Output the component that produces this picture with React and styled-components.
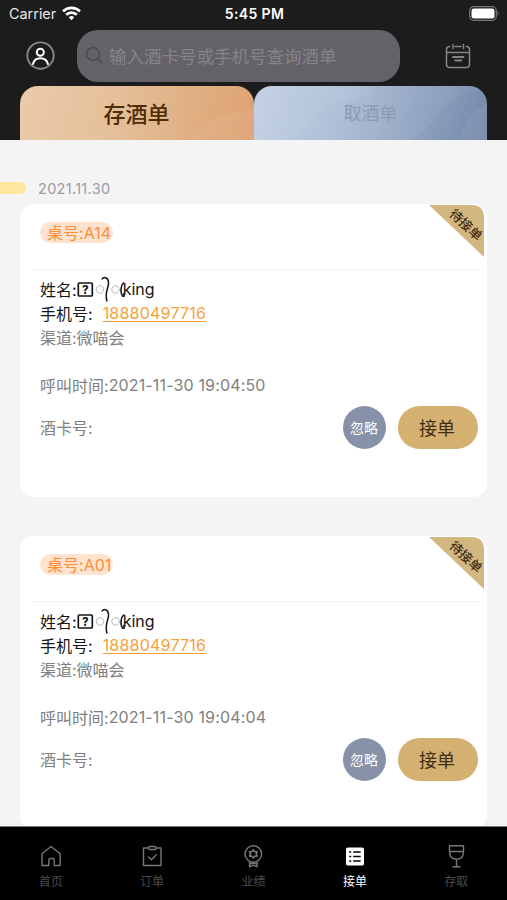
import React from 'react';
import styled, { createGlobalStyle } from 'styled-components';

const Global = createGlobalStyle`
  * { box-sizing: border-box; }
  body { margin: 0; overflow: hidden; }
  button { border: 0; padding: 0; background: none; font: inherit; }
`;

const Screen = styled.div`
  width: 507px;
  height: 900px;
  display: flex;
  flex-direction: column;
  overflow: hidden;
  background: #f4f4f4;
  font-family: Inter, 'Noto Sans CJK SC', sans-serif;
`;
const Header = styled.header`
  flex: none;
  height: 140px;
  background: #1c1c1c;
  display: flex;
  flex-direction: column;
`;
const StatusBar = styled.div`
  height: 30px;
  padding: 0 7px 3px 9px;
  display: grid;
  grid-template-columns: 1fr auto 1fr;
  align-items: center;
  color: #fff;
  font-size: 14px;
`;
const Carrier = styled.div`
  display: flex;
  align-items: center;
  gap: 6px;
  color: #e6e6e6;
  font-size: 14.4px;
`;
const Clock = styled.div`
  font-weight: 600;
  font-size: 14px;
  letter-spacing: 0.35px;
`;
const BatterySlot = styled.div`
  display: flex;
  justify-content: flex-end;
`;
const SearchRow = styled.div`
  height: 56px;
  display: flex;
  align-items: flex-start;
  padding-left: 25px;
`;
const Avatar = styled.div`
  width: 31px;
  height: 52px;
  display: flex;
  align-items: center;
`;
const SearchBox = styled.div`
  margin-left: 21px;
  width: 323px;
  height: 52px;
  border-radius: 21px;
  background: #646268;
  display: flex;
  align-items: center;
  padding: 0 0 1px 8px;
  gap: 5px;
  color: #858489;
  font-size: 17.5px;
  white-space: nowrap;
`;
const CalendarSlot = styled.div`
  margin-left: 45px;
  height: 52px;
  display: flex;
  align-items: center;
`;
const Tabs = styled.div`
  height: 54px;
  margin: 0 20px;
  display: flex;
`;
const Tab = styled.button`
  width: ${p => (p.$active ? 234 : 233)}px;
  height: 54px;
  border-radius: 18px 18px 0 0;
  overflow: hidden;
  display: grid;
  > * { grid-area: 1 / 1; }
  place-items: center;
  color: ${p => (p.$active ? '#4f2c08' : '#8b9bb2')};
  font-size: ${p => (p.$active ? 22 : 18)}px;
  font-weight: ${p => (p.$active ? 500 : 400)};
  background: ${p => (p.$active
    ? 'linear-gradient(105deg, #ebcbab 0%, #e5c09a 38%, #dfac7e 78%, #dfa273 100%)'
    : 'linear-gradient(105deg, #bfcee4 0%, #abbcd4 38%, #8da1be 72%, #7388aa 100%)')};
`;
const TabLabel = styled.span`
  padding: 0 1px 2px 0;
`;
const Body = styled.main`
  flex: none;
  height: 686px;
  overflow: hidden;
  display: flex;
  flex-direction: column;
`;
const DateRow = styled.div`
  flex: none;
  height: 64px;
  padding-top: 32px;
  display: flex;
  align-items: center;
  gap: 12px;
  color: #9a9ca5;
  font-size: 14.5px;
  letter-spacing: 0.3px;
`;
const DateMark = styled.span`
  width: 26px;
  height: 12px;
  border-radius: 0 6px 6px 0;
  background: #ffe6a0;
`;
const Card = styled.section`
  position: relative;
  flex: none;
  height: 292.5px;
  width: 467px;
  margin: 0 20px 39.5px;
  border-radius: 14px;
  background: #fff;
  padding: 18px 9px 0 20px;
  font-size: 16px;
  color: #7f7f7f;
`;
const Ribbon = styled.div`
  position: absolute;
  right: 2px;
  top: 1px;
`;
const TableTag = styled.div`
  display: inline-flex;
  align-items: center;
  height: 21px;
  padding: 0 2px 1px 7px;
  border-radius: 11px;
  background: #ffe3cf;
  color: #f98e38;
  font-size: 16px;
  white-space: nowrap;
`;
const Divider = styled.div`
  height: 1px;
  margin: 26px -3px 7px -8px;
  background: #f4f4f4;
`;
const Line = styled.div`
  height: 24px;
  display: flex;
  align-items: center;
  white-space: nowrap;
  color: ${p => (p.$strong ? '#151515' : '#808080')};
  margin-top: ${p => p.$gap || 0}px;
`;
const Phone = styled.span`
  margin-left: 10px;
  color: #f9a03c;
  font-size: 16px;
  letter-spacing: 0.22px;
  text-decoration: underline;
  text-underline-offset: 2px;
  text-decoration-thickness: 1px;
`;
const Time = styled.span`
  letter-spacing: 0.15px;
`;
const Actions = styled.div`
  height: 43px;
  margin-top: 8.5px;
  display: flex;
  align-items: center;
`;
const CardNo = styled.span`
  flex: 1;
`;
const IgnoreButton = styled.button`
  width: 43px;
  height: 43px;
  padding-right: 1px;
  border-radius: 50%;
  background: #8791a7;
  color: #fff;
  font-size: 14px;
`;
const AcceptButton = styled.button`
  width: 80px;
  height: 43px;
  margin-left: 12px;
  padding-right: 2px;
  border-radius: 22px;
  background: #d4b071;
  color: #432d12;
  font-size: 18px;
`;
const TabBar = styled.nav`
  flex: none;
  height: 74px;
  background: #000;
  border-top: 1px solid #777;
  display: grid;
  grid-template-columns: repeat(5, 1fr);
`;
const NavItem = styled.div`
  display: flex;
  flex-direction: column;
  align-items: center;
  padding-top: 17px;
  color: ${p => (p.$active ? '#fff' : '#777')};
`;
const NavLabel = styled.span`
  margin-top: 5px;
  height: 18px;
  line-height: 18px;
  font-size: 12px;
  color: ${p => (p.$active ? '#fff' : '#4c4c4c')};
`;

const stroke = { fill: 'none', stroke: 'currentColor', strokeWidth: 1.4, strokeLinecap: 'round', strokeLinejoin: 'round' };

const WifiIcon = () => (
  <svg width="19" height="15" viewBox="0 0 19 15" fill="none" stroke="#fff" strokeWidth="2.7">
    <path d="M1 5.4a12.2 12.2 0 0 1 17 0" />
    <path d="M4.2 8.7a7.6 7.6 0 0 1 10.6 0" />
    <path d="M9.5 14.2 6.8 11.3a4 4 0 0 1 5.4 0z" fill="#fff" stroke="none" />
  </svg>
);
const BatteryIcon = () => (
  <svg width="31" height="15" viewBox="0 0 31 15">
    <rect x=".7" y=".7" width="26.6" height="13.6" rx="4" fill="none" stroke="#777" strokeWidth="1.2" />
    <rect x="2.5" y="2.5" width="23" height="10" rx="2.3" fill="#fff" />
    <path d="M28.5 5q2.2 2.5 0 5z" fill="#777" />
  </svg>
);
const UserIcon = () => (
  <svg width="30" height="30" viewBox="0 0 30 30" fill="none">
    <circle cx="15.5" cy="14.6" r="13.2" stroke="#858585" strokeWidth="1.9" />
    <circle cx="15.3" cy="11.3" r="3.5" stroke="#fff" strokeWidth="2" />
    <path d="M8 23c1-4.1 3.700-5.700 7.400-5.700s6.500 1.600 7.500 5.700" stroke="#fff" strokeWidth="2" strokeLinecap="round" />
  </svg>
);
const SearchIcon = () => (
  <svg width="19" height="19" viewBox="0 0 19 19" fill="none" stroke="#48474c" strokeWidth="1.4" strokeLinecap="round">
    <circle cx="8" cy="8" r="6.400" /><path d="m12.800 12.800 4.200 4.200" />
  </svg>
);
const CalendarIcon = () => (
  <svg width="26" height="28" viewBox="0 0 26 28" fill="none" stroke="#858585" strokeWidth="1.500" strokeLinecap="round">
    <path d="M4.500 4.500Q1.500 4.500 1.500 7.500v15q0 3 3 3h17q3 0 3-3v-15q0-3-3-3M10 4.500h6M1.500 10.500h23" />
    <path d="M8 2.500v4M18.500 2.500v4" />
    <path d="M8 15h10.500" strokeWidth="1.900" /><path d="M10.300 18.500h6" strokeWidth="1.900" />
  </svg>
);
const RibbonArt = () => (
  <svg width="56" height="53" viewBox="0 0 56 53">
    <path d="M0 0h42q13 0 13 13v39z" fill="#d3b780" />
    <text transform="translate(19.500 10) rotate(43)" fontSize="13" fontWeight="500" fill="#432d12">待接单</text>
  </svg>
);
const GlyphRun = styled.svg`
  overflow: visible;
`;
const OddGlyphs = () => (
  <GlyphRun width="46" height="26" viewBox="0 0 46 26" fill="none" stroke="#151515">
    <rect x="1.300" y="7" width="14" height="13" rx="1" strokeWidth="1.700" />
    <text x="8.300" y="17.700" textAnchor="middle" fontSize="11.500" fontWeight="800" fill="#151515" stroke="none">?</text>
    <circle cx="23" cy="13.500" r="3.700" stroke="#999" strokeWidth="1" strokeDasharray="1.600 .6" />
    <path d="M24.800 3.500c2-4 7.200-1.500 6.700 4.500-.5 5-4 9-1.500 17.500" strokeWidth="1.500" />
    <circle cx="38.500" cy="13.500" r="3.700" stroke="#999" strokeWidth="1" strokeDasharray="1.600 .6" />
    <path d="M47 6.500c-3.500 3-4 10-1.500 13.500 1.500 1 2.500-.5 1-3" strokeWidth="1.600" />
  </GlyphRun>
);

const HomeIcon = () => (
  <svg width="24" height="24" viewBox="0 0 24 24" {...stroke}>
    <path d="M3 9.800 12 2.500l9.200 7.300V21.500h-6v-5.500q0-1.500-1.500-1.500h-2.400q-1.500 0-1.500 1.500v5.500H3z" />
  </svg>
);
const OrderIcon = () => (
  <svg width="24" height="24" viewBox="0 0 24 24" {...stroke}>
    <path d="M8 4H3.500v17.500h17.500V4h-4.500" /><rect x="8.500" y="2.500" width="7.500" height="3" rx="1" /><path d="m8.700 13 2.800 2.700 4.700-5" />
  </svg>
);
const MedalIcon = () => (
  <svg width="24" height="24" viewBox="0 0 24 24" {...stroke}>
    <circle cx="12.300" cy="10" r="8.300" />
    <path d="m12.300 5.700 1.400 2h2.400l-.9 2.200.9 2.200h-2.400l-1.400 2-1.400-2H8.500l.9-2.200-.9-2.200h2.400z" strokeWidth="1.600" />
    <path d="M8.500 18v4.800l3.800-1.600 3.800 1.600V18M8.500 20l3.800-1 3.800 1" />
  </svg>
);
const ListIcon = () => (
  <svg width="24" height="24" viewBox="0 0 24 24">
    <rect x="3" y="3.500" width="18" height="18" rx="1.800" fill="#fff" />
    <path d="M6.200 8h2M10.200 8h7.500M6.200 12.500h2M10.200 12.500h7.500M6.200 17h2M10.200 17h7.500" stroke="#000" strokeWidth="1.400" />
  </svg>
);
const WineIcon = () => (
  <svg width="24" height="24" viewBox="0 0 24 24" {...stroke}>
    <path d="M5.500 1.700h14v6q0 7.200-7 7.500-7-.3-7-7.500zM5.500 7.500h14M12.500 15.200v7.300M9 22.700h7" />
  </svg>
);

const orders = [
  { table: 'A14', time: '2021-11-30 19:04:50' },
  { table: 'A01', time: '2021-11-30 19:04:04' },
];
const navItems = [
  { label: '首页', Icon: HomeIcon },
  { label: '订单', Icon: OrderIcon },
  { label: '业绩', Icon: MedalIcon },
  { label: '接单', Icon: ListIcon, active: true },
  { label: '存取', Icon: WineIcon },
];

const TabWave = ({ warm }) => (
  <svg width="234" height="54" viewBox="0 0 234 54" fill="#fff">
    {warm ? (
      <>
        <path d="M60 54c15-10 30-12 50-14s35-7 55-17v31z" fillOpacity=".03" />
        <path d="M170 54c15-20 35-28 64-31v31z" fillOpacity=".05" />
      </>
    ) : (
      <>
        <path d="M65 28C80 15 100 12 120 10V0H0v54h40z" fillOpacity=".05" />
        <path d="M155 54c30-10 22-40 79-54H0v54z" fillOpacity=".05" />
        <path d="M214 34q8-12 20-17v37h-30z" fillOpacity=".06" />
      </>
    )}
  </svg>
);

const OrderCard = ({ order }) => (
  <Card>
    <Ribbon><RibbonArt /></Ribbon>
    <TableTag>桌号:{order.table}</TableTag>
    <Divider />
    <Line $strong>姓名:<OddGlyphs />king</Line>
    <Line $strong>手机号:<Phone>18880497716</Phone></Line>
    <Line>渠道:微喵会</Line>
    <Line $gap={24}>呼叫时间:<Time>{order.time}</Time></Line>
    <Actions>
      <CardNo>酒卡号:</CardNo>
      <IgnoreButton>忽略</IgnoreButton>
      <AcceptButton>接单</AcceptButton>
    </Actions>
  </Card>
);

export default function App() {
  return (
    <Screen>
      <Global />
      <Header>
        <StatusBar>
          <Carrier>Carrier<WifiIcon /></Carrier>
          <Clock>5:45 PM</Clock>
          <BatterySlot><BatteryIcon /></BatterySlot>
        </StatusBar>
        <SearchRow>
          <Avatar><UserIcon /></Avatar>
          <SearchBox><SearchIcon />输入酒卡号或手机号查询酒单</SearchBox>
          <CalendarSlot><CalendarIcon /></CalendarSlot>
        </SearchRow>
        <Tabs>
          <Tab $active><TabWave warm /><TabLabel>存酒单</TabLabel></Tab>
          <Tab><TabWave /><TabLabel>取酒单</TabLabel></Tab>
        </Tabs>
      </Header>
      <Body>
        <DateRow><DateMark />2021.11.30</DateRow>
        {orders.map(order => <OrderCard key={order.table} order={order} />)}
      </Body>
      <TabBar>
        {navItems.map(({ label, Icon, active }) => (
          <NavItem key={label} $active={active}>
            <Icon />
            <NavLabel $active={active}>{label}</NavLabel>
          </NavItem>
        ))}
      </TabBar>
    </Screen>
  );
}
